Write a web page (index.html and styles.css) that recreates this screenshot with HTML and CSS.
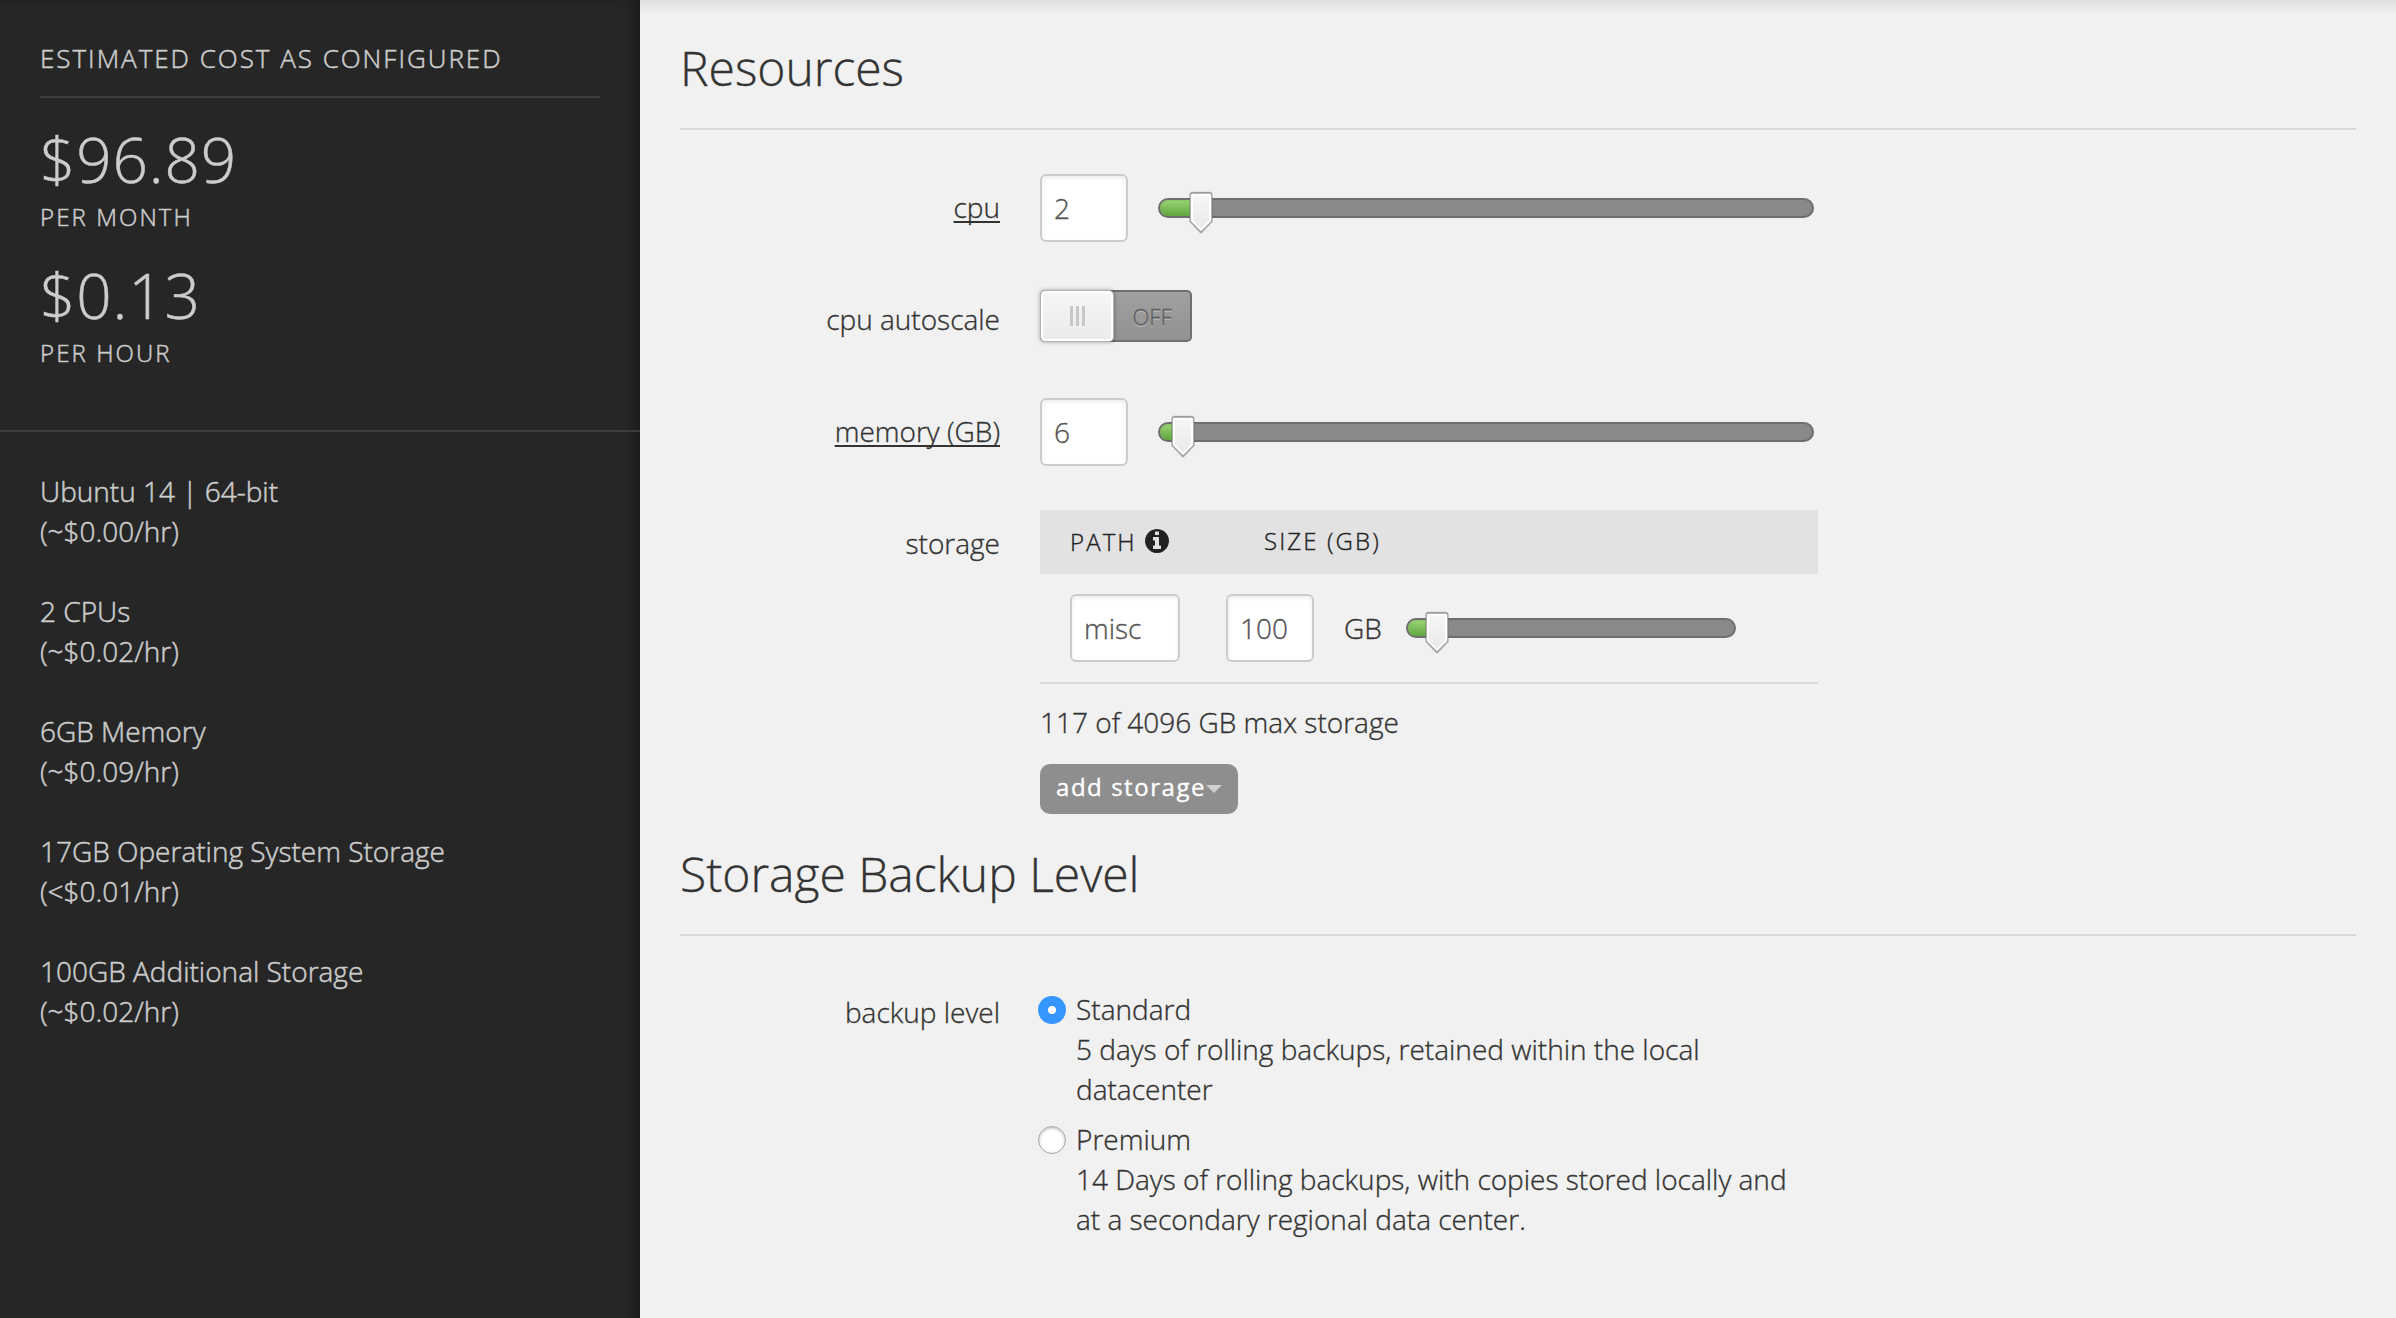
FILE: index.html
```html
<!DOCTYPE html>
<html lang="en">
<head>
<meta charset="utf-8">
<title>Configure Server</title>
<link rel="stylesheet" href="styles.css">
</head>
<body>
<svg class="sprite" aria-hidden="true">
  <defs>
    <linearGradient id="thumb-fill" x1="0" y1="0" x2="0" y2="1">
      <stop offset="0" stop-color="#f6f6f6"/>
      <stop offset="1" stop-color="#e9e9e9"/>
    </linearGradient>
    <symbol id="thumb" viewBox="0 0 28 44" preserveAspectRatio="none">
      <path d="M6 1.5H22Q25.2 1.5 25.2 5V30.5L14.9 41.6Q14 42.5 13.1 41.6L2.8 30.5V5Q2.8 1.5 6 1.5Z" fill="#000" opacity=".12"/>
      <path d="M6.5 2H21.500Q24.500 2 24.500 5V30.200L14.700 40.700Q14 41.400 13.300 40.700L3.500 30.200V5Q3.500 2 6.500 2Z" fill="#9c9c9c"/>
      <path d="M6 3.700H22Q23.500 3.700 23.500 5V29.700L14 39.500L4.500 29.700V5Q4.500 3.700 6 3.700Z" fill="#fff"/>
      <path d="M6.500 5.500H21.500V29L14 37L6.500 29Z" fill="url(#thumb-fill)"/>
    </symbol>
  </defs>
</svg>
<div class="page">
  <aside class="sidebar">
    <section class="cost">
      <h1 class="cost-title">ESTIMATED COST AS CONFIGURED</h1>
      <div class="price">$96.89</div>
      <div class="period">PER MONTH</div>
      <div class="price">$0.13</div>
      <div class="period">PER HOUR</div>
    </section>
    <ul class="items">
      <li>Ubuntu 14 | 64-bit<br>(~$0.00/hr)</li>
      <li>2 CPUs<br>(~$0.02/hr)</li>
      <li>6GB Memory<br>(~$0.09/hr)</li>
      <li>17GB Operating System Storage<br>(&lt;$0.01/hr)</li>
      <li>100GB Additional Storage<br>(~$0.02/hr)</li>
    </ul>
  </aside>
  <main class="main">
    <h2 class="section-title">Resources</h2>
    <div class="rows">
      <div class="row">
        <div class="label"><span class="term">cpu</span></div>
        <div class="control">
          <input class="field" type="text" value="2">
          <div class="slider"><div class="fill" style="width:42px"></div><svg class="thumb" style="left:42px"><use href="#thumb"/></svg></div>
        </div>
      </div>
      <div class="row">
        <div class="label">cpu autoscale</div>
        <div class="control">
          <div class="toggle"><div class="handle"><i></i><i></i><i></i></div><span class="state">OFF</span></div>
        </div>
      </div>
      <div class="row">
        <div class="label"><span class="term">memory (GB)</span></div>
        <div class="control">
          <input class="field" type="text" value="6">
          <div class="slider"><div class="fill" style="width:24px"></div><svg class="thumb" style="left:24px"><use href="#thumb"/></svg></div>
        </div>
      </div>
      <div class="row">
        <div class="label">storage</div>
        <div class="storage">
          <div class="table-head">
            <span class="path-head">PATH <svg class="info" viewBox="0 128 1536 1536"><path fill="#222" d="M1024 1376v-160q0-14-9-23t-23-9h-96v-512q0-14-9-23t-23-9h-320q-14 0-23 9t-9 23v160q0 14 9 23t23 9h96v320h-96q-14 0-23 9t-9 23v160q0 14 9 23t23 9h448q14 0 23-9t9-23zm-128-896v-160q0-14-9-23t-23-9h-192q-14 0-23 9t-9 23v160q0 14 9 23t23 9h192q14 0 23-9t9-23zm640 416q0 209-103 385.500t-279.500 279.500-385.500 103-385.500-103-279.500-279.500-103-385.500 103-385.500 279.500-279.500 385.500-103 385.500 103 279.500 279.500 103 385.500z"/></svg></span>
            <span>SIZE (GB)</span>
          </div>
          <div class="table-row">
            <input class="field path" type="text" value="misc">
            <input class="field" type="text" value="100">
            <span class="unit">GB</span>
            <div class="slider short"><div class="fill" style="width:30px"></div><svg class="thumb" style="left:30px"><use href="#thumb"/></svg></div>
          </div>
          <p class="usage">117 of 4096 GB max storage</p>
          <button class="add" type="button">add storage<span class="caret"></span></button>
        </div>
      </div>
    </div>
    <h2 class="section-title">Storage Backup Level</h2>
    <div class="backup">
      <div class="label">backup level</div>
      <div class="options">
        <div class="option">
          <span class="radio checked"></span>
          <div>Standard<br>5 days of rolling backups, retained within the local<br>datacenter</div>
        </div>
        <div class="option">
          <span class="radio"></span>
          <div>Premium<br>14 Days of rolling backups, with copies stored locally and<br>at a secondary regional data center.</div>
        </div>
      </div>
    </div>
  </main>
  <div class="top-shade"></div>
</div>
</body>
</html>
```
FILE: styles.css
```css
* { box-sizing: border-box; }

body {
  margin: 0;
  font: 300 28px/40px "Open Sans", sans-serif;
  color: #333;
  background: #f1f1f1;
  -webkit-text-stroke-width: .35px;
}

.sprite { position: absolute; width: 0; height: 0; }

.page {
  position: relative;
  display: flex;
  height: 1318px;
  overflow: hidden;
}

.top-shade {
  position: absolute;
  top: 0;
  left: 0;
  right: 0;
  height: 14px;
  background: linear-gradient(rgba(0, 0, 0, .08), rgba(0, 0, 0, 0));
}

/* Sidebar */
.sidebar {
  flex: none;
  width: 640px;
  background: #262626;
  color: #ccc;
  box-shadow: inset -14px 0 14px -10px rgba(0, 0, 0, .35);
  -webkit-text-stroke-width: .5px;
}

.cost {
  height: 432px;
  padding: 38px 40px 0;
  border-bottom: 2px solid #3d3d3d;
}

.cost-title {
  margin: 0 0 31px;
  padding-bottom: 18px;
  border-bottom: 2px solid #3d3d3d;
  font-weight: 300;
  font-size: 26px;
  letter-spacing: 1.98px;
}

.price {
  font-size: 62px;
  line-height: 60px;
  letter-spacing: .9px;
}

.period {
  margin: 8px 0 28px;
  font-size: 24px;
  letter-spacing: 2.1px;
}

.items {
  list-style: none;
  margin: 0;
  padding: 39px 40px 0;
}

.items li { margin-bottom: 40px; }

/* Main column */
.main {
  flex: 1;
  padding: 38px 40px 0;
}

.section-title {
  margin: 0;
  padding-bottom: 30px;
  border-bottom: 2px solid #d9d9d9;
  font-size: 48px;
  font-weight: 300;
  line-height: 60px;
}

.rows {
  display: flex;
  flex-direction: column;
  gap: 44px;
  padding: 44px 0 30px;
}

.row, .backup {
  display: grid;
  grid-template-columns: 320px 778px;
  column-gap: 40px;
  min-height: 68px;
}

.label {
  padding-top: 13px;
  text-align: right;
}

.term {
  text-decoration: underline;
  text-decoration-thickness: 2px;
  text-underline-offset: 3px;
  text-decoration-skip-ink: none;
}

.control {
  display: flex;
  align-items: center;
  gap: 30px;
}

.field {
  width: 88px;
  height: 68px;
  padding: 0 12px 1px;
  border: 2px solid #ccc;
  border-radius: 6px;
  background: #fff;
  box-shadow: inset 0 2px 4px rgba(0, 0, 0, .08);
  color: #555;
  font: inherit;
  -webkit-text-stroke-width: .35px;
}

.field.path { width: 110px; }

.slider {
  position: relative;
  width: 656px;
  height: 20px;
  border: 2px solid #6e6e6e;
  border-radius: 10px;
  background: #898989;
}

.slider.short { width: 330px; }

.fill {
  height: 16px;
  border-radius: 8px 0 0 8px;
  background: linear-gradient(#9bd575, #5fa73f);
  box-shadow: inset 0 1px 1px rgba(0, 0, 0, .08);
}

.thumb {
  position: absolute;
  top: -10px;
  width: 30px;
  height: 46px;
  margin-left: -16px;
}

.toggle {
  display: flex;
  width: 152px;
  height: 52px;
  margin-top: -8px;
  border: 2px solid #707070;
  border-radius: 5px;
  background: linear-gradient(#a0a0a0, #929292);
}

.handle {
  display: flex;
  flex: none;
  align-items: center;
  justify-content: center;
  gap: 3px;
  width: 74px;
  height: 52px;
  margin: -2px 0 0 -2px;
  border: 1px solid #b2b2b2;
  border-radius: 5px;
  background: linear-gradient(#f6f6f6, #ebebeb);
  box-shadow: inset 0 0 0 2px #fff, 0 0 4px rgba(0, 0, 0, .35);
}

.handle i {
  width: 3px;
  height: 20px;
  background: #c8c8c8;
}

.state {
  flex: 1;
  text-align: center;
  font-size: 22px;
  line-height: 48px;
  color: #606060;
  text-shadow: 0 2px 0 rgba(255, 255, 255, .25);
}

/* Storage table */
.table-head {
  display: flex;
  height: 64px;
  padding: 0 30px;
  background: #e2e2e2;
  color: #222;
  font-size: 24px;
  line-height: 62px;
  letter-spacing: 2.1px;
}

.path-head {
  display: flex;
  align-items: center;
  gap: 8px;
  width: 194px;
}

.info {
  width: 24px;
  height: 24px;
  margin-top: -2px;
}

.table-row {
  display: flex;
  align-items: center;
  height: 110px;
  padding: 0 30px;
  border-bottom: 2px solid #d9d9d9;
}

.field.path { margin-right: 46px; }

.unit {
  width: 62px;
  margin: 0 0 0 30px;
}

.usage { margin: 18px 0 22px; }

.add {
  display: flex;
  align-items: center;
  height: 50px;
  padding: 0 16px 4px;
  border: 0;
  border-radius: 10px;
  background: #8e8e8e;
  color: #fff;
  font: 400 24px/40px "Open Sans", sans-serif;
  letter-spacing: 1.55px;
}

.caret {
  border: 8px solid transparent;
  border-top-color: #d0d0d0;
  border-bottom: 0;
  margin-top: 4px;
}

/* Backup level */
.backup { padding-top: 43px; }

.options { padding-top: 10px; }

.option {
  display: grid;
  grid-template-columns: 28px 1fr;
  column-gap: 10px;
  margin: 0 0 10px -2px;
  white-space: nowrap;
}

.radio {
  width: 28px;
  height: 28px;
  margin-top: 7px;
  border: 1px solid #a8a8a8;
  border-radius: 50%;
  background: #fff;
  box-shadow: inset 0 1px 3px rgba(0, 0, 0, .3);
}

.radio.checked {
  border: 0;
  background: radial-gradient(circle, #fff 3.600px, #3596ff 4.500px);
  box-shadow: none;
}
```
